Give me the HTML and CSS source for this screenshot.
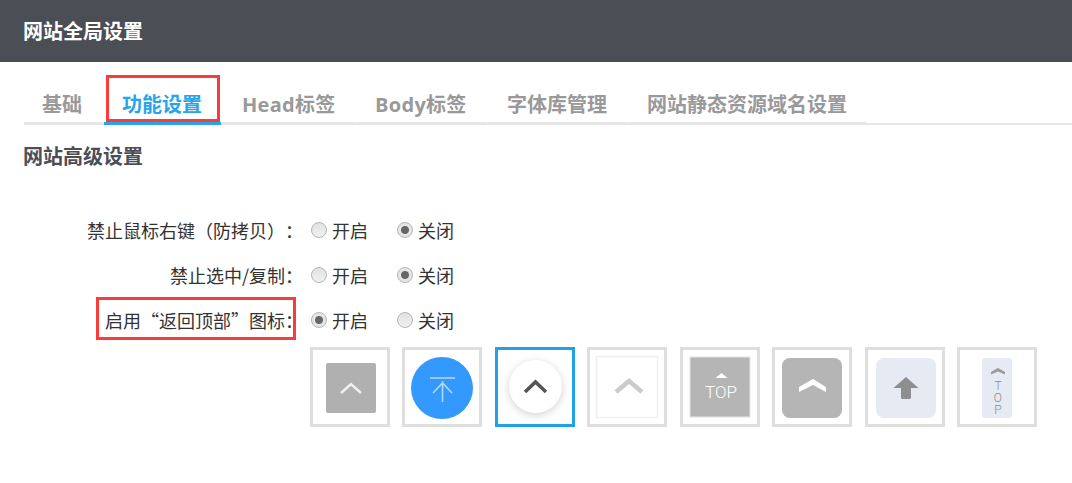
FILE: index.html
```html
<!DOCTYPE html>
<html lang="zh-CN">
<head>
<meta charset="utf-8">
<title>网站全局设置</title>
<link rel="stylesheet" href="styles.css">
</head>
<body>
<header class="topbar">网站全局设置</header>
<nav class="tabs">
  <a class="tab t1">基础</a>
  <a class="tab t2 active">功能设置<span class="mark mark-tab"></span></a>
  <a class="tab t3">Head标签</a>
  <a class="tab t4">Body标签</a>
  <a class="tab t5">字体库管理</a>
  <a class="tab t6">网站静态资源域名设置</a>
</nav>
<h2 class="section">网站高级设置</h2>
<form class="form">
  <div class="row">
    <label class="label">禁止鼠标右键（防拷贝）：</label>
    <div class="options">
      <label class="opt"><input type="radio" name="a">开启</label>
      <label class="opt"><input type="radio" name="a" checked>关闭</label>
    </div>
  </div>
  <div class="row">
    <label class="label">禁止选中/复制：</label>
    <div class="options">
      <label class="opt"><input type="radio" name="b">开启</label>
      <label class="opt"><input type="radio" name="b" checked>关闭</label>
    </div>
  </div>
  <div class="row">
    <label class="label">启用“返回顶部”图标：<span class="mark mark-label"></span></label>
    <div class="options">
      <label class="opt"><input type="radio" name="c" checked>开启</label>
      <label class="opt"><input type="radio" name="c">关闭</label>
    </div>
  </div>
  <div class="tiles">
    <div class="tile"><svg viewBox="0 0 74 74"><rect x="13" y="13" width="50" height="50" rx="2" fill="#b0b0b0"/><path d="M28 43l10-9 10 9" fill="none" stroke="#f1f1f1" stroke-width="2.400"/></svg></div>
    <div class="tile"><svg viewBox="0 0 74 74"><circle cx="37" cy="38" r="31" fill="#3399ff"/><path d="M25 28h25M37.500 31v21M28 43l9.500-10 9.500 10" fill="none" stroke="#b5d9fb" stroke-width="1.600"/></svg></div>
    <div class="tile selected"><div class="disc"></div><svg class="over" viewBox="0 0 74 74"><path d="M27 42l10.500-10 10.500 10" fill="none" stroke="#555" stroke-width="3.600"/></svg></div>
    <div class="tile"><svg viewBox="0 0 74 74"><rect x="6.500" y="6.500" width="61" height="61" fill="#fff" stroke="#f0f0f0" stroke-width="1.500"/><path d="M26 42l13-11 13 11" fill="none" stroke="#c9cdc9" stroke-width="4.500"/></svg></div>
    <div class="tile"><svg viewBox="0 0 74 74"><rect x="7" y="7" width="60" height="60" fill="#b5b5b5" stroke="#e4e4e4"/><path d="M38.500 23l6 5h-12z" fill="#fff"/><text class="top-word" x="38" y="48" text-anchor="middle">TOP</text></svg></div>
    <div class="tile"><svg viewBox="0 0 74 74"><rect x="7" y="8" width="60" height="60" rx="8" fill="#b5b5b5"/><path d="M24 37l14-8 13 8v5l-13-7-14 7z" fill="#fff"/></svg></div>
    <div class="tile"><svg viewBox="0 0 74 74"><rect x="8" y="8" width="60" height="60" rx="8" fill="#e6eaf2"/><path d="M38 27l12.500 11H43v9.500q0 1.500-1.500 1.500h-7q-1.500 0-1.500-1.500V38h-7.500z" fill="#8e8e8e"/></svg></div>
    <div class="tile"><svg viewBox="0 0 74 74"><rect x="22" y="8" width="30" height="60" rx="3" fill="#e6eaf2"/><path d="M31 22l7-4 7 4v2.500l-7-3-7 3z" fill="#9a9a9a"/><text class="top-letters" x="38" y="29">TOP</text></svg></div>
  </div>
</form>
</body>
</html>
```
FILE: styles.css
```css
* { box-sizing: border-box; }
html, body { margin: 0; padding: 0; background: #fff; }
body {
  font-family: "Noto Sans CJK SC", "Open Sans", sans-serif;
  color: #4b4e55;
  overflow: hidden;
  text-spacing-trim: space-all;
}
.topbar {
  height: 62px;
  background: #4b4e55;
  color: #fff;
  font-size: 20px;
  font-weight: 700;
  line-height: 62px;
  padding-left: 23px;
  margin-bottom: 22px;
}
.tabs {
  display: flex;
  gap: 1px;
  margin-left: 24px;
  height: 41px;
  border-bottom: 2px solid #e6e6e6;
  font-family: "Open Sans", "Noto Sans CJK SC", sans-serif;
}
.tab {
  position: relative;
  flex: none;
  height: 41px;
  margin-bottom: -2px;
  border-bottom: 3px solid #e6e6e6;
  font-size: 20px;
  font-weight: 700;
  line-height: 42px;
  color: #999;
  white-space: nowrap;
}
.t1 { width: 79px; padding-left: 18px; }
.t2 { width: 117px; padding-left: 18px; }
.t3 { width: 133px; padding-left: 20px; letter-spacing: .3px; }
.t4 { width: 131px; padding-left: 19px; letter-spacing: .3px; }
.t5 { width: 139px; padding-left: 19px; }
.t6 { width: 238px; padding-left: 19px; }
.tab.active {
  color: #27a4ea;
  border-bottom-color: #27a4ea;
}
.mark { position: absolute; border: 3px solid #f83c3c; pointer-events: none; }
.mark-tab { left: 2px; top: -9px; width: 114px; height: 47px; }
.mark-label { left: 96px; top: 0; width: 200px; height: 43px; }
.section {
  margin: 16px 0 0 23px;
  font-size: 20px;
  font-weight: 700;
  line-height: 30px;
  color: #4b4e55;
}
.form { margin-top: 36px; }
.row {
  position: relative;
  display: flex;
  align-items: center;
  height: 45px;
  font-size: 18px;
  color: #333;
}
.label {
  width: 303px;
  text-align: right;
  white-space: nowrap;
}
.options {
  display: flex;
  gap: 29px;
  margin-left: 8px;
}
.opt {
  display: flex;
  align-items: center;
  gap: 5px;
  line-height: 24px;
}
.opt input {
  appearance: none;
  width: 16px;
  height: 16px;
  margin: 0;
  border: 1px solid #b4b4b4;
  border-radius: 50%;
  background: linear-gradient(#e2e2e2, #f0f0f0);
}
.opt input:checked {
  background: radial-gradient(circle, #666 0 3.500px, #e6e6e6 4.500px);
}
.tiles {
  display: flex;
  gap: 12.5px;
  margin: 5px 0 0 309.900px;
}
.tile {
  position: relative;
  flex: none;
  width: 80px;
  height: 80px;
  border: 3px solid #dedede;
  background: #fff;
}
.tile svg { display: block; width: 74px; height: 74px; }
.tile.selected { border-color: #1fa3e6; }
.disc {
  position: absolute;
  left: 11px;
  top: 10px;
  width: 53px;
  height: 53px;
  border-radius: 50%;
  background: #fff;
  box-shadow: 0 2px 8px rgba(0, 0, 0, .18);
}
.tile svg.over { position: absolute; left: 0; top: 0; }
.top-word {
  font-family: "Roboto", sans-serif;
  font-weight: 300;
  font-size: 17px;
  fill: #fff;
}
.top-letters {
  font-family: "Roboto", sans-serif;
  font-weight: 300;
  font-size: 12px;
  fill: #8c8c8c;
  writing-mode: vertical-rl;
  text-orientation: upright;
  letter-spacing: -2px;
}
```
